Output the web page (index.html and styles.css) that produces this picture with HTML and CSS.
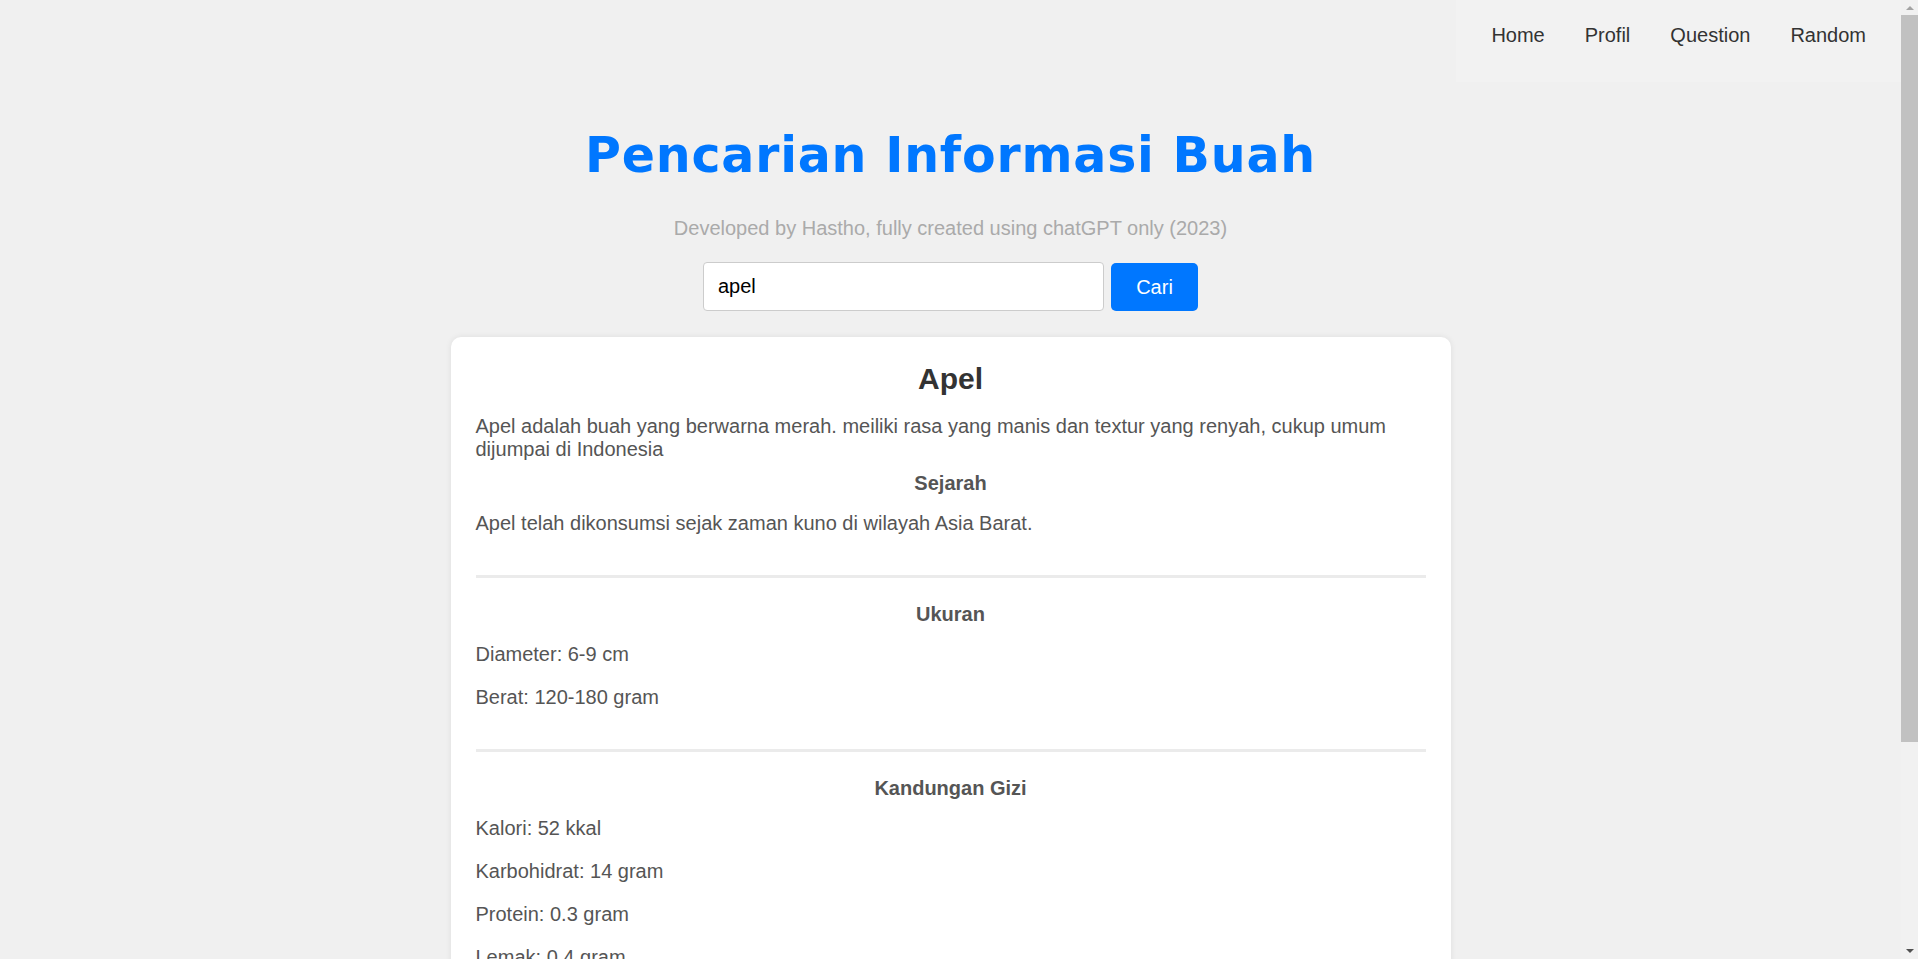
FILE: index.html
```html
<!DOCTYPE html>
<html lang="id">
<head>
<meta charset="utf-8">
<title>Pencarian Informasi Buah</title>
<link rel="stylesheet" href="styles.css">
</head>
<body>
<header class="topbar">
  <nav class="menu">
    <a class="menu-link" href="#">Home</a>
    <a class="menu-link" href="#">Profil</a>
    <a class="menu-link" href="#">Question</a>
    <a class="menu-link" href="#">Random</a>
  </nav>
</header>
<main class="page">
  <h1 class="title">Pencarian Informasi Buah</h1>
  <p class="subtitle">Developed by Hastho, fully created using chatGPT only (2023)</p>
  <form class="search" onsubmit="return false;">
    <input class="search-input" type="text" value="apel">
    <button class="search-btn" type="submit">Cari</button>
  </form>
  <section class="card">
    <h2 class="fruit-name">Apel</h2>
    <p class="desc">Apel adalah buah yang berwarna merah. meiliki rasa yang manis dan textur yang renyah, cukup umum dijumpai di Indonesia</p>
    <div class="section">
      <h4 class="section-title">Sejarah</h4>
      <p class="item">Apel telah dikonsumsi sejak zaman kuno di wilayah Asia Barat.</p>
    </div>
    <hr class="divider">
    <div class="section">
      <h4 class="section-title">Ukuran</h4>
      <p class="item">Diameter: 6-9 cm</p>
      <p class="item">Berat: 120-180 gram</p>
    </div>
    <hr class="divider">
    <div class="section">
      <h4 class="section-title">Kandungan Gizi</h4>
      <p class="item">Kalori: 52 kkal</p>
      <p class="item">Karbohidrat: 14 gram</p>
      <p class="item">Protein: 0.3 gram</p>
      <p class="item">Lemak: 0.4 gram</p>
      <p class="item">Serat: 2.4 gram</p>
      <p class="item">Vitamin C: 4.6 mg</p>
    </div>
  </section>
</main>
<div class="scrollbar" aria-hidden="true">
  <span class="sb-btn sb-up"></span>
  <span class="sb-track"><span class="sb-thumb"></span></span>
  <span class="sb-btn sb-down"></span>
</div>
</body>
</html>
```

FILE: styles.css
```css
* { box-sizing: border-box; }

html, body {
  padding: 0;
  background: #f0f0f0;
}

html { margin: 0; }

body {
  margin: 0 17px 0 0;
  font-family: "Liberation Sans", Arial, sans-serif;
  color: #555;
}

.topbar {
  display: flex;
  justify-content: flex-end;
  height: 82px;
}

.menu {
  display: flex;
  align-items: flex-start;
  padding: 24px 15px 0;
  background: #f2f2f2;
}

.menu-link {
  padding: 0 20px;
  font-size: 20px;
  line-height: 23px;
  color: #333;
  text-decoration: none;
}

.page {
  padding-bottom: 123px;
}

.title {
  margin: 46px 0 0;
  text-align: center;
  font-family: "DejaVu Sans", Verdana, sans-serif;
  font-weight: bold;
  font-size: 49px;
  line-height: 56px;
  letter-spacing: 0.8px;
  color: #0077ff;
}

.subtitle {
  margin: 33px 0 0;
  text-align: center;
  font-size: 20px;
  line-height: 23px;
  color: #aaa;
}

.search {
  display: flex;
  justify-content: center;
  align-items: flex-end;
  gap: 7px;
  margin-top: 22px;
}

.search-input {
  width: 401px;
  height: 49px;
  padding: 0 14px;
  border: 1px solid #ccc;
  border-radius: 4px;
  background: #fff;
  font-family: "Liberation Sans", Arial, sans-serif;
  font-size: 20px;
  color: #000;
  outline: none;
}

.search-btn {
  width: 87px;
  height: 48px;
  padding: 0;
  border: none;
  border-radius: 5px;
  background: #0077ff;
  color: #fff;
  font-family: "Liberation Sans", Arial, sans-serif;
  font-size: 20px;
  cursor: pointer;
}

.card {
  display: flex;
  flex-direction: column;
  width: 1000px;
  margin: 26px auto 0;
  padding: 25px;
  background: #fff;
  border-radius: 10px;
  box-shadow: 0 0 6px rgba(0, 0, 0, 0.08);
}

.fruit-name {
  margin: 0 0 18px;
  text-align: center;
  font-size: 30px;
  line-height: 34.5px;
  font-weight: bold;
  color: #333;
}

.desc {
  margin: 0;
  font-size: 20px;
  line-height: 23px;
}

.section {
  margin-top: 11px;
}

.section-title {
  margin: 0 0 17px;
  text-align: center;
  font-size: 20px;
  line-height: 23px;
  font-weight: bold;
  color: #555;
}

.item {
  margin: 0 0 20px;
  font-size: 20px;
  line-height: 23px;
}

.divider {
  height: 3px;
  margin: 20px 0 14px;
  border: none;
  background: #ebebeb;
}

/* browser-style vertical scrollbar drawn over the right edge */
.scrollbar {
  position: fixed;
  top: 0;
  right: 0;
  width: 17px;
  height: 100vh;
  display: flex;
  flex-direction: column;
  background: #f1f1f1;
}

.sb-btn {
  display: flex;
  align-items: center;
  justify-content: center;
  height: 15px;
  flex: none;
}

.sb-down { height: 17px; }

.sb-up::before {
  content: "";
  border-left: 4px solid transparent;
  border-right: 4px solid transparent;
  border-bottom: 4px solid #a3a3a3;
}

.sb-down::before {
  content: "";
  border-left: 4px solid transparent;
  border-right: 4px solid transparent;
  border-top: 4px solid #505050;
}

.sb-track {
  flex: 1;
  display: flex;
  flex-direction: column;
}

.sb-thumb {
  height: 727px;
  background: #c1c1c1;
}
```
